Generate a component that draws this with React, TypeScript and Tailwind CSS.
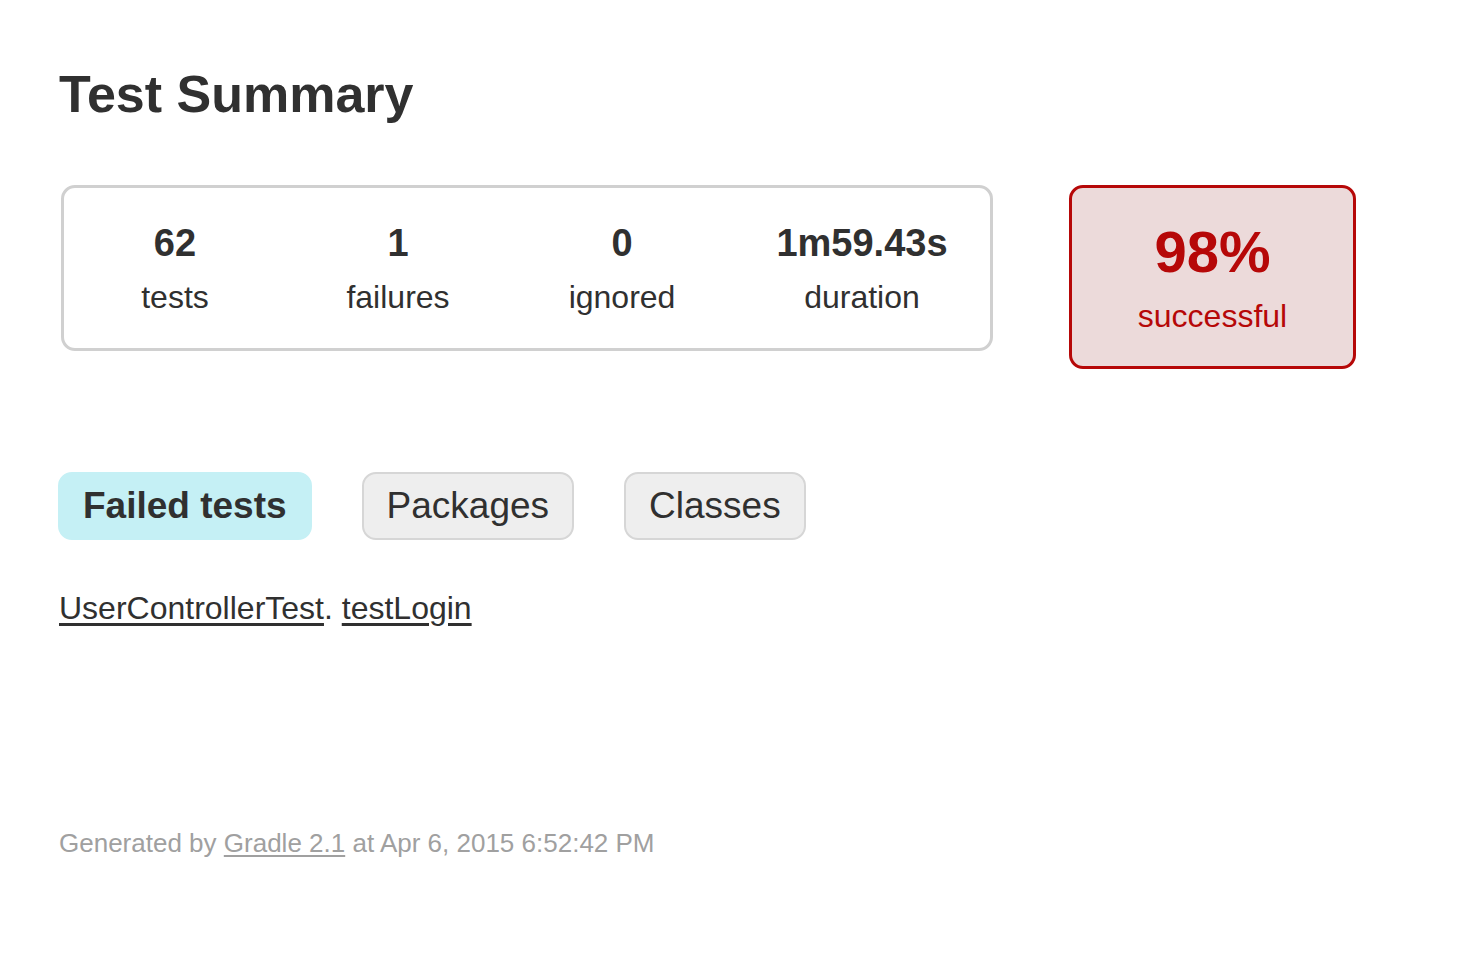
import React from 'react';

const counters = [
  { value: '62', label: 'tests', width: 'w-[222px]' },
  { value: '1', label: 'failures', width: 'w-[224px]' },
  { value: '0', label: 'ignored', width: 'w-[224px]' },
  { value: '1m59.43s', label: 'duration', width: 'w-[256px]' },
];

const tabs = [
  { label: 'Failed tests', selected: true },
  { label: 'Packages', selected: false },
  { label: 'Classes', selected: false },
];

const App: React.FC = () => {
  return (
    <div className="min-h-screen bg-white pl-[59px] pt-[68px] text-[#303030] font-['Liberation_Sans',Arial,sans-serif]">
      <h1 className="text-[52px] leading-[52px] font-bold">Test Summary</h1>

      {/* Summary */}
      <div className="mt-[65px] flex items-start">
        <div className="ml-[2px] flex w-[932px] rounded-[14px] border-[3px] border-[#d0d0d0]">
          {counters.map((c) => (
            <div key={c.label} className={`${c.width} pt-[36px] pb-[35px] text-center`}>
              <div className="text-[38px] leading-[38px] font-bold">{c.value}</div>
              <div className="mt-[19px] text-[32px] leading-[32px]">{c.label}</div>
            </div>
          ))}
        </div>
        <div className="ml-[76px] w-[287px] rounded-[14px] border-[3px] border-[#b60808] bg-[#ecdada] pt-[35px] pb-[34px] text-center text-[#b60808]">
          <div className="text-[58px] leading-[58px] font-bold">98%</div>
          <div className="mt-[19px] text-[32px] leading-[32px]">successful</div>
        </div>
      </div>

      {/* Tabs */}
      <div className="mt-[103px] flex gap-[50px]">
        {tabs.map((t) =>
          t.selected ? (
            <div
              key={t.label}
              className="-ml-[1px] h-[68px] rounded-[14px] border-2 border-[#c5f0f5] bg-[#c5f0f5] px-[23px] text-[37px] leading-[64px] font-bold"
            >
              {t.label}
            </div>
          ) : (
            <div
              key={t.label}
              className="h-[68px] rounded-[14px] border-2 border-[#d6d6d6] bg-[#eeeeee] px-[23px] text-[37px] leading-[64px]"
            >
              {t.label}
            </div>
          )
        )}
      </div>

      <div className="mt-[52px] text-[32px] leading-[32px]">
        <a href="#" className="underline underline-offset-[4px]">UserControllerTest</a>.{' '}
        <a href="#" className="underline underline-offset-[4px]">testLogin</a>
      </div>

      <div className="mt-[206px] text-[26px] leading-[26px] text-[#a0a0a0]">
        Generated by{' '}
        <a href="#" className="underline underline-offset-[3px]">Gradle 2.1</a> at Apr 6, 2015 6:52:42 PM
      </div>
    </div>
  );
};

export default App;
